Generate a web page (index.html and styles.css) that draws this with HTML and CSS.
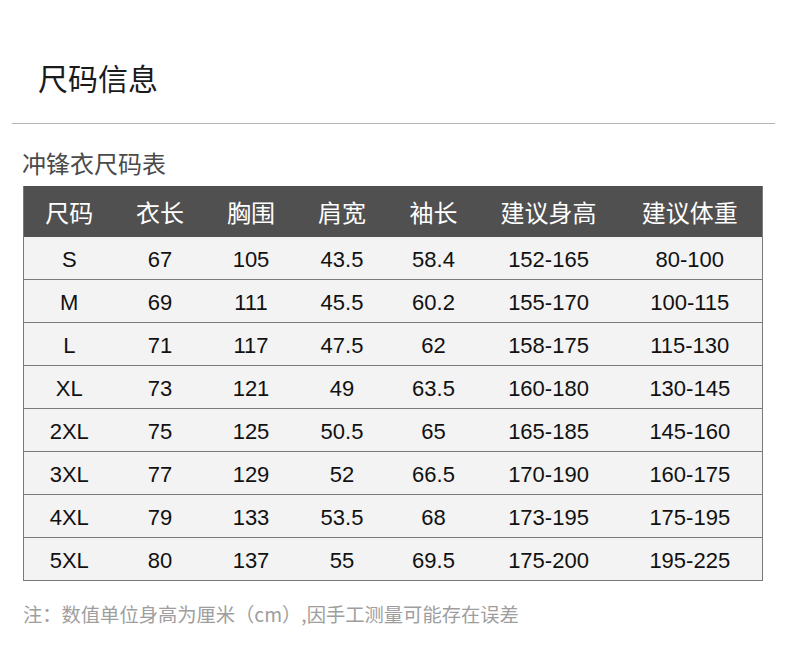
FILE: index.html
```html
<!DOCTYPE html>
<html lang="zh-CN">
<head>
<meta charset="utf-8">
<title>尺码信息</title>
<link rel="stylesheet" href="styles.css">
</head>
<body>
<div class="page">
  <h1 class="title">尺码信息</h1>
  <div class="divider"></div>
  <h2 class="subtitle">冲锋衣尺码表</h2>
  <table class="size-table">
    <colgroup>
      <col class="c1"><col class="c2"><col class="c3"><col class="c4"><col class="c5"><col class="c6"><col class="c7">
    </colgroup>
    <thead>
      <tr><th>尺码</th><th>衣长</th><th>胸围</th><th>肩宽</th><th>袖长</th><th>建议身高</th><th>建议体重</th></tr>
    </thead>
    <tbody>
      <tr><td>S</td><td>67</td><td>105</td><td>43.5</td><td>58.4</td><td>152-165</td><td>80-100</td></tr>
      <tr><td>M</td><td>69</td><td>111</td><td>45.5</td><td>60.2</td><td>155-170</td><td>100-115</td></tr>
      <tr><td>L</td><td>71</td><td>117</td><td>47.5</td><td>62</td><td>158-175</td><td>115-130</td></tr>
      <tr><td>XL</td><td>73</td><td>121</td><td>49</td><td>63.5</td><td>160-180</td><td>130-145</td></tr>
      <tr><td>2XL</td><td>75</td><td>125</td><td>50.5</td><td>65</td><td>165-185</td><td>145-160</td></tr>
      <tr><td>3XL</td><td>77</td><td>129</td><td>52</td><td>66.5</td><td>170-190</td><td>160-175</td></tr>
      <tr><td>4XL</td><td>79</td><td>133</td><td>53.5</td><td>68</td><td>173-195</td><td>175-195</td></tr>
      <tr><td>5XL</td><td>80</td><td>137</td><td>55</td><td>69.5</td><td>175-200</td><td>195-225</td></tr>
    </tbody>
  </table>
  <p class="note">注：数值单位身高为厘米（cm）,因手工测量可能存在误差</p>
</div>
</body>
</html>
```

FILE: styles.css
```css
html, body {
  margin: 0;
  padding: 0;
  background: #ffffff;
}

.page {
  width: 790px;
  height: 672px;
  overflow: hidden;
  font-family: "Noto Sans CJK SC", "Liberation Sans", sans-serif;
}

.title {
  margin: 0;
  padding: 56px 0 0 38px;
  font-size: 30px;
  line-height: 42px;
  font-weight: normal;
  color: #1a1a1a;
}

.divider {
  margin: 25px 15px 0 12px;
  border-top: 1px solid #b3b3b3;
}

.subtitle {
  margin: 23px 0 0 22px;
  font-size: 24px;
  line-height: 32px;
  font-weight: normal;
  color: #4a4a4a;
}

.size-table {
  margin: 7px 0 0 23px;
  width: 739px;
  border-collapse: collapse;
  table-layout: fixed;
  border-left: 1px solid #7a7a7a;
  border-right: 1px solid #7a7a7a;
}

.c1 { width: 91px; }
.c2 { width: 91px; }
.c3 { width: 91px; }
.c4 { width: 91px; }
.c5 { width: 92px; }
.c6 { width: 138px; }
.c7 { width: 145px; }

.size-table th {
  height: 51px;
  padding: 0;
  background: #505050;
  color: #ffffff;
  font-size: 24px;
  font-weight: normal;
  text-align: center;
  vertical-align: middle;
  line-height: 30px;
}

.size-table td {
  height: 39px;
  padding: 3px 0 0;
  background: #f3f3f3;
  border-bottom: 1px solid #7a7a7a;
  color: #111111;
  font-family: "Liberation Sans", Arial, sans-serif;
  font-size: 22px;
  text-align: center;
  vertical-align: middle;
  line-height: 26px;
}

.note {
  margin: 20px 0 0 23px;
  font-size: 19.3px;
  line-height: 26px;
  color: #9e9e9e;
}
```
